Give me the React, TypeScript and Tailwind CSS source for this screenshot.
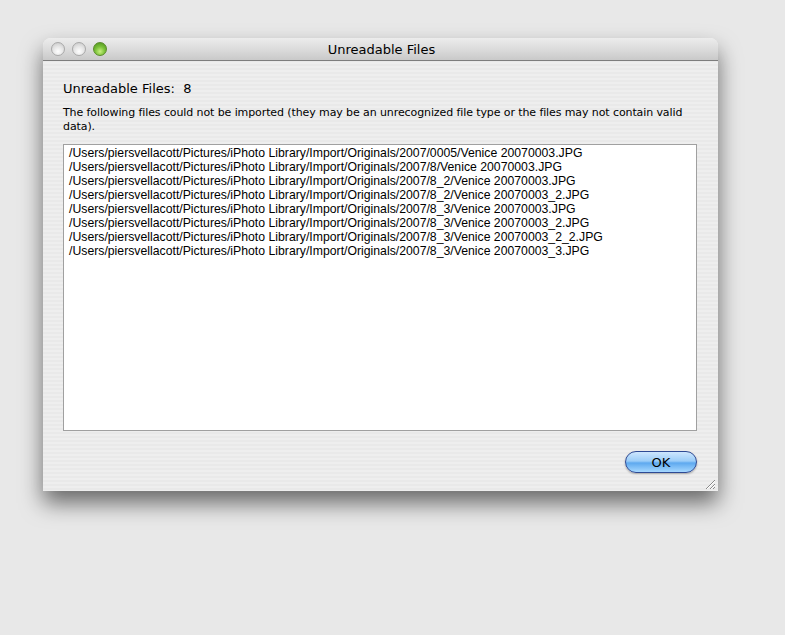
import React from 'react';

const files = [
  '/Users/piersvellacott/Pictures/iPhoto Library/Import/Originals/2007/0005/Venice 20070003.JPG',
  '/Users/piersvellacott/Pictures/iPhoto Library/Import/Originals/2007/8/Venice 20070003.JPG',
  '/Users/piersvellacott/Pictures/iPhoto Library/Import/Originals/2007/8_2/Venice 20070003.JPG',
  '/Users/piersvellacott/Pictures/iPhoto Library/Import/Originals/2007/8_2/Venice 20070003_2.JPG',
  '/Users/piersvellacott/Pictures/iPhoto Library/Import/Originals/2007/8_3/Venice 20070003.JPG',
  '/Users/piersvellacott/Pictures/iPhoto Library/Import/Originals/2007/8_3/Venice 20070003_2.JPG',
  '/Users/piersvellacott/Pictures/iPhoto Library/Import/Originals/2007/8_3/Venice 20070003_2_2.JPG',
  '/Users/piersvellacott/Pictures/iPhoto Library/Import/Originals/2007/8_3/Venice 20070003_3.JPG',
];

const TrafficLight: React.FC<{ green?: boolean }> = ({ green }) => (
  <span
    className={`block w-[14px] h-[14px] rounded-full border ${
      green
        ? 'border-[#5a8a2a] bg-[radial-gradient(circle_at_50%_70%,#c8f080_0%,#7cc23a_45%,#4a8e1a_100%)]'
        : 'border-[#a8a8a8] bg-[radial-gradient(circle_at_50%_70%,#ffffff_0%,#e4e4e4_50%,#c4c4c4_100%)]'
    }`}
  />
);

export default function App() {
  return (
    <div className="w-[785px] h-[635px] bg-[#e8e8e8] pt-[38px] pl-[43px] font-['DejaVu_Sans',sans-serif] text-black">
      <div className="w-[675px] h-[453px] flex flex-col rounded-t-[8px] overflow-hidden shadow-[0_12px_22px_rgba(0,0,0,0.55)] bg-[repeating-linear-gradient(180deg,#eeeeee_0px,#eeeeee_2px,#e9e9e9_2px,#e9e9e9_4px)]">
        {/* Title bar */}
        <div className="relative h-[23px] flex items-center border-b border-[#7d7d7d] bg-[linear-gradient(180deg,#ececec_0%,#dcdcdc_50%,#c9c9c9_100%)]">
          <div className="flex gap-[7px] pl-[8px]">
            <TrafficLight />
            <TrafficLight />
            <TrafficLight green />
          </div>
          <div className="absolute inset-0 flex items-center justify-center text-[13px] pl-[2px] pt-[2px]">
            Unreadable Files
          </div>
        </div>

        {/* Body */}
        <div className="flex-1 flex flex-col pl-[20px] pr-[21px] pt-[20px]">
          <div className="text-[13px] leading-[16px] whitespace-pre">Unreadable Files:  8</div>
          <p className="mt-[9px] text-[11px] leading-[14px] tracking-[-0.1px]">
            The following files could not be imported (they may be an unrecognized file type or the files may not contain valid data).
          </p>
          <div className="mt-[10px] h-[287px] bg-white border border-[#a0a0a0] pt-[1px] pl-[5px] font-['Liberation_Sans',Arial,sans-serif] text-[12.25px] leading-[14px]">
            {files.map((f, i) => (
              <div key={i}>{f}</div>
            ))}
          </div>
          <div className="flex justify-end mt-[20px]">
            <button className="w-[72px] h-[22px] rounded-full border border-[#2e4a94] text-[13px] leading-none bg-[linear-gradient(180deg,#cde6fe_0%,#9ccdf8_45%,#5ea9ef_55%,#a6d8ff_100%)] shadow-[0_1px_2px_rgba(0,0,0,0.3)]">
              OK
            </button>
          </div>
          <div className="flex justify-end mt-auto mr-[-19px] mb-[1px]">
            <svg width="12" height="12" viewBox="0 0 12 12">
              <path d="M11 2L2 11M11 6L6 11M11 9L9 11" stroke="#8a8a8a" strokeWidth="1" />
              <path d="M11 3L3 11M11 7L7 11" stroke="#ffffff" strokeWidth="1" />
            </svg>
          </div>
        </div>
      </div>
    </div>
  );
}
